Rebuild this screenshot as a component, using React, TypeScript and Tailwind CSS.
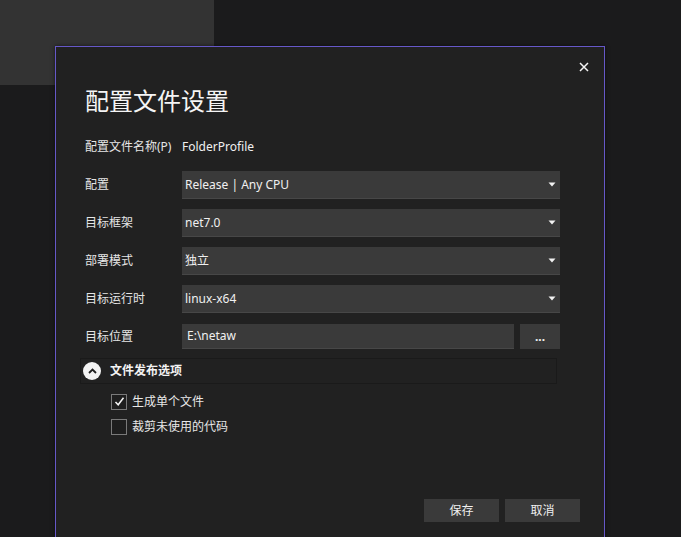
import React from "react";

const font = { fontFamily: '"Noto Sans", "Noto Sans CJK SC", sans-serif' };

function Arrow() {
  return (
    <svg width="8" height="5" viewBox="0 0 8 5" className="shrink-0">
      <path d="M0.5 0.5 H7.5 L4 4.5 Z" fill="#f2f2f2" />
    </svg>
  );
}

function Select({ value }: { value: string }) {
  return (
    <div className="flex h-[28px] w-[378px] items-center justify-between border-b border-[#474747] bg-[#3a3a3a] pl-[3px] pr-[4px] text-[12px] text-[#f0f0f0]">
      <span>{value}</span>
      <Arrow />
    </div>
  );
}

function Row({ label, children, className = "" }: { label: string; children: React.ReactNode; className?: string }) {
  return (
    <div className={"flex items-center " + className}>
      <div className="w-[97px] shrink-0 text-[12px] text-[#e6e6e6]">{label}</div>
      {children}
    </div>
  );
}

function Checkbox({ checked, label }: { checked?: boolean; label: string }) {
  return (
    <div className="flex h-[17px] items-center gap-[5px]">
      <div className="flex h-[16px] w-[16px] items-center justify-center border border-[#7a7a7a] bg-[#1e1e1e]">
        {checked && (
          <svg width="11" height="11" viewBox="0 0 11 11">
            <path d="M1.5 6 L4.2 8.8 L9.5 1.8" stroke="#f5f5f5" strokeWidth="1.5" fill="none" />
          </svg>
        )}
      </div>
      <span className="text-[12px] text-[#e8e8e8]">{label}</span>
    </div>
  );
}

export default function App() {
  return (
    <div className="relative h-[537px] w-[681px] overflow-hidden bg-[#1b1b1c]" style={font}>
      <div className="absolute left-0 top-0 h-[85px] w-[214px] bg-[#333333]" />
      <div className="absolute left-[55px] top-[46px] h-[520px] w-[550px] border border-[#6658c8] bg-[#212121] shadow-[0_0_4px_rgba(0,0,0,0.6)]">
        <button className="absolute right-[13px] top-[13px] flex h-[14px] w-[14px] items-center justify-center">
          <svg width="10" height="10" viewBox="0 0 10 10">
            <path d="M1 1 L9 9 M9 1 L1 9" stroke="#f5f5f5" strokeWidth="1.5" />
          </svg>
        </button>
        <div className="flex flex-col pl-[29px] pt-[38px]">
          <div className="h-[32px] text-[24px] leading-[32px] text-[#f5f5f5]">配置文件设置</div>
          <Row label="配置文件名称(P)" className="mt-[16px] h-[28px]">
            <span className="text-[12px] text-[#f0f0f0]">FolderProfile</span>
          </Row>
          <Row label="配置" className="mt-[10px]">
            <Select value="Release | Any CPU" />
          </Row>
          <Row label="目标框架" className="mt-[10px]">
            <Select value="net7.0" />
          </Row>
          <Row label="部署模式" className="mt-[10px]">
            <Select value="独立" />
          </Row>
          <Row label="目标运行时" className="mt-[10px]">
            <Select value="linux-x64" />
          </Row>
          <Row label="目标位置" className="mt-[11px]">
            <div className="flex h-[25px] w-[332px] items-center border-b border-[#474747] bg-[#3a3a3a] pl-[5px] text-[12px] text-[#f0f0f0]">
              E:\netaw
            </div>
            <div className="ml-[6px] flex h-[25px] w-[40px] items-center justify-center bg-[#3a3a3a] text-[12px] font-bold leading-none text-[#f0f0f0]">
              ...
            </div>
          </Row>
          <div className="-ml-[5px] mt-[9px] flex h-[26px] w-[477px] items-center gap-[9px] border border-[#1a1a1a] pl-[2px]">
            <div className="flex h-[18px] w-[18px] items-center justify-center rounded-full bg-[#f2f2f2]">
              <svg width="9" height="6" viewBox="0 0 9 6">
                <path d="M1 5 L4.5 1.5 L8 5" stroke="#1e1e1e" strokeWidth="1.8" fill="none" />
              </svg>
            </div>
            <span className="text-[12px] font-bold text-[#f2f2f2]">文件发布选项</span>
          </div>
          <div className="ml-[26px] mt-[9px] flex flex-col gap-[8px]">
            <Checkbox checked label="生成单个文件" />
            <Checkbox label="裁剪未使用的代码" />
          </div>
          <div className="mr-[24px] mt-[64px] flex justify-end gap-[6px]">
            <button className="h-[23px] w-[75px] bg-[#3a3a3a] text-[12px] text-[#f0f0f0]">保存</button>
            <button className="h-[23px] w-[75px] bg-[#3a3a3a] text-[12px] text-[#f0f0f0]">取消</button>
          </div>
        </div>
      </div>
    </div>
  );
}
